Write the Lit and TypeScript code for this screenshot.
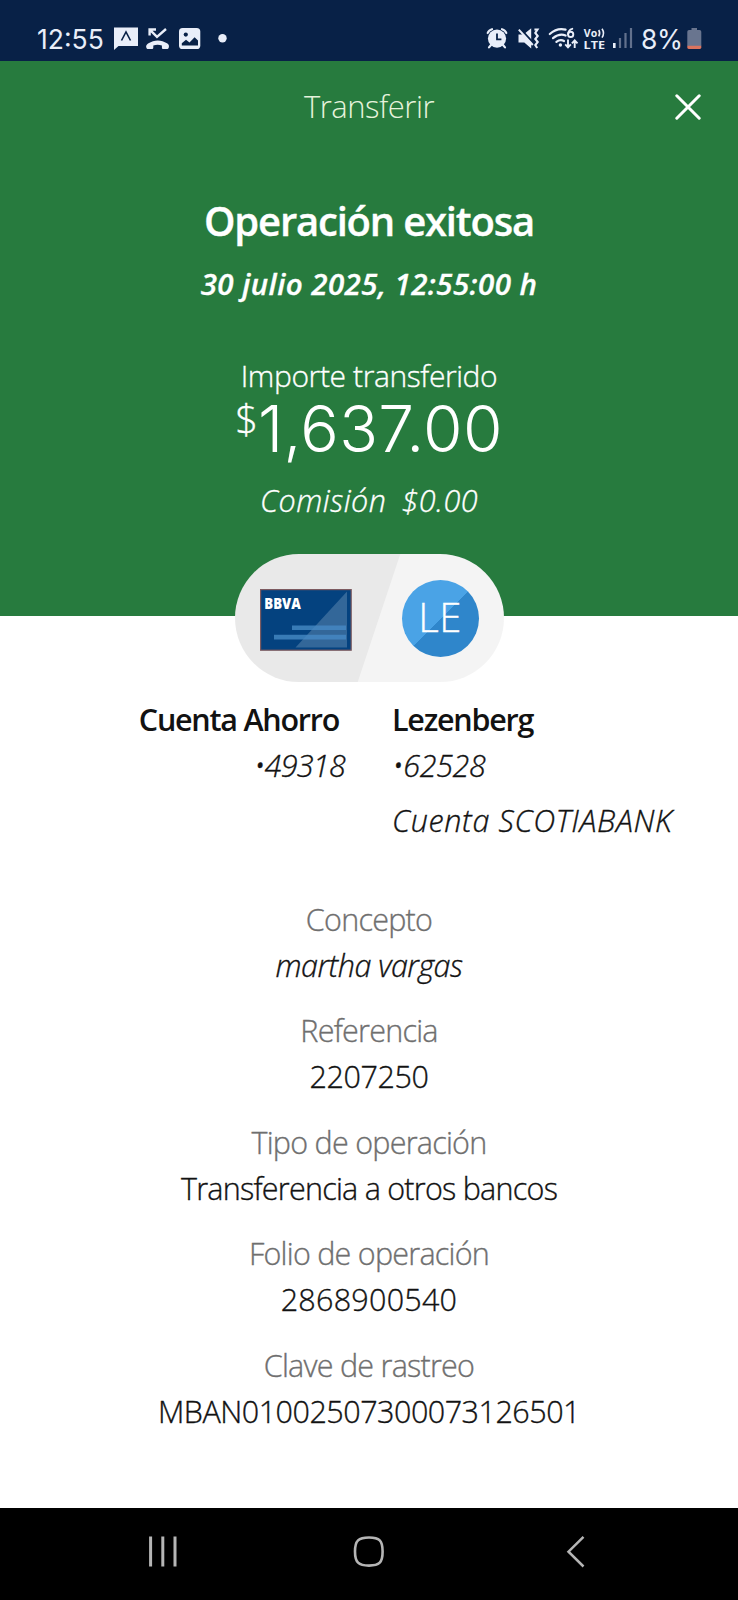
import { LitElement, html, css } from "lit";
import { customElement, property } from "lit/decorators.js";

@customElement("status-bar")
class StatusBar extends LitElement {
  static styles = css`
    :host {
      display: flex;
      justify-content: space-between;
      align-items: flex-start;
      height: 61px;
      padding: 20px 36px 0 37px;
      box-sizing: border-box;
      background: #082147;
      color: #e9eef9;
      font: 400 26.5px/38px Inter, sans-serif;
    }
    .side { display: flex; }
    .clock { width: 73px; letter-spacing: 0; }
    .battery { width: 46px; letter-spacing: -0.5px; }
    svg { display: block; }
    .tag { font: 700 11px "Open Sans", sans-serif; }
  `;
  render() {
    return html`
      <div class="side">
        <span class="clock">12:55</span>
        <svg width="120" height="36" viewBox="0 0 120 36">
          <path d="M4 7.5H28V26H8.5L4 30Z" fill="#e9eef9" />
          <path d="M11.5 20.5L16 12L20.5 20.5" fill="none" stroke="#082147" stroke-width="1.6" />
          <path d="M39.6 15.6V9.5H46M40 9.8L47 16.8L56 9" fill="none" stroke="#e9eef9" stroke-width="2.4" />
          <path d="M36.2 27.3C35.8 25.4 37 24.3 38.5 23.3C44 19.4 51.5 19.4 57 23.3C58.6 24.4 59.4 25.6 58.8 27.4C58.4 28.7 57.8 29 56.8 29H53.6C52.4 29 51.9 28.5 51.9 27.4V25.5Q47.6 24.2 43.3 25.5V27.4C43.3 28.5 42.8 29 41.6 29H38.2C37.1 29 36.6 28.7 36.2 27.3Z" fill="#e9eef9" />
          <rect x="69" y="8" width="21.3" height="21" rx="3.6" fill="#e9eef9" />
          <circle cx="75.8" cy="14.6" r="2.1" fill="#082147" />
          <path d="M71.8 25.6V23.3L76 19.8L79.5 22.6L84.6 17.2L88 20.6V25.6Z" fill="#082147" />
          <circle cx="112.5" cy="18.3" r="4.2" fill="#e9eef9" />
        </svg>
      </div>
      <div class="side">
        <svg width="161" height="36" viewBox="0 0 161 36">
          <g fill="none" stroke="#e9eef9" stroke-width="2.2" stroke-linecap="round">
            <path d="M7.7 13Q8.6 10.2 12 9.2M22 9.2Q25.4 10.2 26.3 13M11 25L9 27.4M23 25L25 27.4" />
          </g>
          <circle cx="17" cy="18.6" r="9.1" fill="#e9eef9" />
          <path d="M17 13.4V19.4H21.4" fill="none" stroke="#082147" stroke-width="1.8" />

          <path d="M38.5 14.5H43.5L51.2 8.3V28.4L44.3 22.6H38.5Z" fill="#e9eef9" />
          <path d="M40 8.6L53.2 23" stroke="#082147" stroke-width="2.2" />
          <path d="M38.8 9.6L52.8 25" stroke="#e9eef9" stroke-width="2" />
          <path d="M54.4 9.5H57.5L55.3 13L57.7 16L55.3 19L57.7 22L55.3 25L57.2 28" fill="none" stroke="#e9eef9" stroke-width="2.1" />

          <g fill="none" stroke="#e9eef9" stroke-width="2.2" stroke-linecap="round">
            <path d="M69.8 14Q77 7.4 85.6 9.6M73 18.2Q79.6 12.9 85.6 15.6M76.4 21.9Q80.3 19 84 21" />
            <path d="M92.3 8.8Q88.3 9.8 88.1 14.2" stroke-width="1.9" />
            <circle cx="90.7" cy="14.4" r="2.6" stroke-width="1.9" />
          </g>
          <circle cx="80.4" cy="25" r="1.7" fill="#e9eef9" />
          <path d="M88 19.5V27M85.2 24.4L88 27.3L90.8 24.4M94.7 28V20.6M91.9 23.3L94.7 20.4L97.5 23.3" fill="none" stroke="#e9eef9" stroke-width="1.9" />

          <text class="tag" x="103.8" y="17" fill="#e9eef9" textLength="13.4" lengthAdjust="spacingAndGlyphs">Vo</text>
          <path d="M118.7 10Q120.7 13.2 118.7 16.4M122 8.8Q125 13.2 122 17.6" fill="none" stroke="#e9eef9" stroke-width="1.6" />
          <text class="tag" x="103.6" y="28.9" fill="#e9eef9" textLength="21.4" lengthAdjust="spacingAndGlyphs">LTE</text>

          <rect x="133" y="23" width="2.6" height="5" fill="#e9eef9" />
          <path d="M140 18V28M145.5 13V28M151 8V28" stroke="#62718d" stroke-width="2.2" />
        </svg>
        <span class="battery">8%</span>
        <svg width="15" height="36" viewBox="0 0 15 36">
          <path d="M4.5 8H10V10H12.6Q14.3 10 14.3 11.7V26H0.3V11.7Q0.3 10 2 10H4.5Z" fill="#69758f" />
          <path d="M0.3 25.8H14.3V27.6Q14.3 29 12.9 29H1.7Q0.3 29 0.3 27.6Z" fill="#db745f" />
        </svg>
      </div>
    `;
  }
}

@customElement("transfer-header")
class TransferHeader extends LitElement {
  static styles = css`
    :host {
      display: flex;
      flex-direction: column;
      align-items: center;
      height: 555px;
      padding-top: 1px;
      box-sizing: border-box;
      background: #277b3e;
      color: #fff;
      white-space: nowrap;
    }
    .bar {
      display: grid;
      grid-template-columns: 1fr auto 1fr;
      align-self: stretch;
      align-items: center;
      height: 88px;
      padding: 0 37px;
    }
    .bar svg { justify-self: end; grid-column: 3; margin-top: 2px; }
    .screen { grid-column: 2; font-size: 31px; line-height: 88px; letter-spacing: -0.5px; color: #e6f3dc; -webkit-text-stroke: 0; }
    .title { margin-top: 42.5px; font-size: 40px; line-height: 56px; font-weight: 600; letter-spacing: -1.2px; }
    .date { margin-top: 13px; font-size: 29.5px; line-height: 44px; font-weight: 600; font-style: italic; letter-spacing: 0.45px; }
    .label { margin-top: 50px; font-size: 30px; line-height: 40px; letter-spacing: -0.4px; }
    .amount { display: flex; font-size: 64px; line-height: 65.5px; }
    .sum { font-family: Inter, sans-serif; letter-spacing: 0.3px; -webkit-text-stroke: 0; }
    .sign { font-size: 40px; line-height: 45px; }
    .fee { display: flex; gap: 15px; margin-top: 17px; font-size: 30.5px; line-height: 44px; font-style: italic; letter-spacing: 0.5px; }
  `;
  render() {
    return html`
      <div class="bar">
        <span class="screen">Transferir</span>
        <svg width="26" height="26" viewBox="0 0 26 26">
          <path d="M1.8 1.8L24.2 24.2M24.2 1.8L1.8 24.2" stroke="#fff" stroke-width="3" stroke-linecap="round" />
        </svg>
      </div>
      <div class="title">Operación exitosa</div>
      <div class="date">30 julio 2025, 12:55:00 h</div>
      <div class="label">Importe transferido</div>
      <div class="amount"><span class="sign">$</span><span class="sum">1,637.00</span></div>
      <div class="fee"><span>Comisión</span><span>$0.00</span></div>
    `;
  }
}

@customElement("transfer-pill")
class TransferPill extends LitElement {
  static styles = css`
    :host {
      display: flex;
      align-items: center;
      justify-content: space-between;
      position: relative;
      width: 269px;
      height: 128px;
      margin: -62px auto 0;
      padding: 0 25px;
      box-sizing: border-box;
      border-radius: 64px;
      background: linear-gradient(108.4deg, #e9e9e9 0 52.9%, #f4f4f4 53.2%);
    }
    svg { display: block; margin-top: 4px; }
    .brand { font: 800 15px "Open Sans", sans-serif; }
    .avatar {
      width: 77px;
      height: 77px;
      border-radius: 50%;
      background: linear-gradient(135deg, #4aa3e6 50%, #2f86cb 50.6%);
      color: #fff;
      text-align: center;
      font-size: 40px;
      line-height: 73px;
      letter-spacing: 0.5px;
    }
  `;
  render() {
    return html`
      <svg width="92" height="62" viewBox="0 0 92 62">
        <rect x="0.6" y="0.6" width="90.6" height="60.6" fill="#04427f" stroke="#7d5a60" stroke-width="1.2" />
        <path d="M35.5 58.5L87 2.5V58.5Z" fill="#336799" />
        <path d="M32 36.5H86V41H32ZM14 45.7H86V50.4H14Z" fill="#468ac4" opacity="0.8" />
        <text class="brand" x="4.3" y="19.5" fill="#fff" textLength="36.5" lengthAdjust="spacingAndGlyphs">BBVA</text>
      </svg>
      <div class="avatar">LE</div>
    `;
  }
}

@customElement("detail-row")
class DetailRow extends LitElement {
  @property() label = "";
  @property() value = "";
  static styles = css`
    :host { display: block; text-align: center; line-height: 46px; font-size: 30.5px; white-space: nowrap; }
    .label { color: #6f6f6f; letter-spacing: -0.75px; }
    .value { color: #121212; letter-spacing: -0.4px; }
    :host([slanted]) .value { font-style: italic; letter-spacing: -0.5px; }
    :host([tight]) .value { letter-spacing: -0.75px; }
    :host([wide]) .value { letter-spacing: 0.25px; }
    :host([tracking]) .value { letter-spacing: -0.5px; }
  `;
  render() {
    return html`<div class="label">${this.label}</div><div class="value">${this.value}</div>`;
  }
}

@customElement("nav-bar")
class NavBar extends LitElement {
  static styles = css`
    :host { display: grid; grid-template-columns: 1fr auto 1fr; height: 92px; padding: 27px 152px 0 148px; box-sizing: border-box; background: #000; }
    .home { margin-left: 4px; }
    .back { justify-self: end; }
  `;
  render() {
    return html`
      <svg width="30" height="34" viewBox="0 0 30 34">
        <path d="M2.6 1.5V31.5M14.8 1.5V31.5M27 1.5V31.5" stroke="#b5b5b5" stroke-width="3" />
      </svg>
      <svg class="home" width="32" height="34" viewBox="0 0 32 34">
        <path d="M16 2.500C26.500 2.500 29.600 5.600 29.600 16.500C29.600 27.500 26.500 30.600 16 30.600C5.500 30.600 2 27.500 2 16.500C2 5.600 5.500 2.500 16 2.500Z" fill="none" stroke="#b5b5b5" stroke-width="2.6" />
      </svg>
      <svg class="back" width="20" height="34" viewBox="0 0 20 34">
        <path d="M17.5 1.8L2.5 16.7L17.5 31.5" fill="none" stroke="#b5b5b5" stroke-width="2.5" />
      </svg>
    `;
  }
}

@customElement("app-root")
class AppRoot extends LitElement {
  static styles = css`
    :host {
      display: flex;
      flex-direction: column;
      height: 1600px;
      overflow: hidden;
      background: #fff;
      color: #121212;
      font-family: "Open Sans", "Noto Sans", sans-serif;
      font-weight: 300;
      -webkit-text-stroke: 0.35px;
    }
    status-bar { -webkit-text-stroke: 0; }
    .accounts {
      display: grid;
      grid-template-columns: 345px 1fr;
      column-gap: 47px;
      margin-top: 14px;
      font-size: 30.5px;
      line-height: 46px;
      white-space: nowrap;
    }
    .from { text-align: right; }
    .name { font-weight: 600; letter-spacing: -1.25px; -webkit-text-stroke: 0; }
    .from .name { padding-right: 6px; }
    .number { font-style: italic; letter-spacing: -0.3px; }
    .from .number { letter-spacing: -0.7px; }
    .bank { margin-top: 9px; font-style: italic; letter-spacing: 0.65px; }
    .details { display: flex; flex-direction: column; gap: 19.5px; margin-top: 52.5px; flex: 1; }
  `;
  render() {
    return html`
      <status-bar></status-bar>
      <transfer-header></transfer-header>
      <transfer-pill></transfer-pill>
      <section class="accounts">
        <div class="from">
          <div class="name">Cuenta Ahorro</div>
          <div class="number">•49318</div>
        </div>
        <div class="to">
          <div class="name">Lezenberg</div>
          <div class="number">•62528</div>
          <div class="bank">Cuenta SCOTIABANK</div>
        </div>
      </section>
      <section class="details">
        <detail-row label="Concepto" value="martha vargas" slanted></detail-row>
        <detail-row label="Referencia" value="2207250"></detail-row>
        <detail-row label="Tipo de operación" value="Transferencia a otros bancos" tight></detail-row>
        <detail-row label="Folio de operación" value="2868900540" wide></detail-row>
        <detail-row label="Clave de rastreo" value="MBAN01002507300073126501" tracking></detail-row>
      </section>
      <nav-bar></nav-bar>
    `;
  }
}
